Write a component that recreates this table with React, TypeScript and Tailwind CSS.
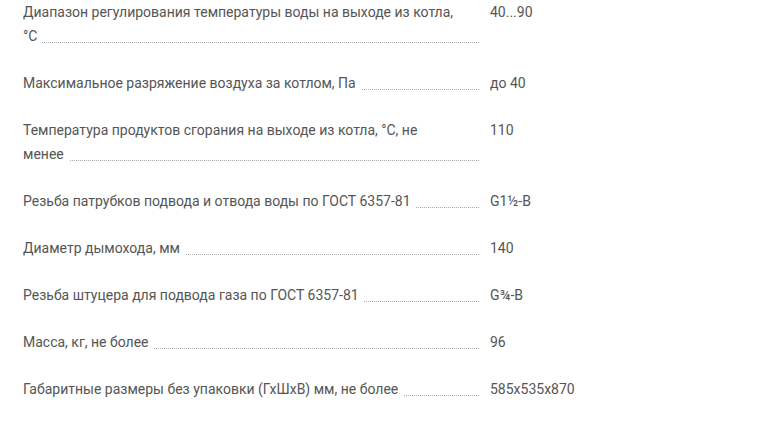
const specs = [
  {
    label: "Диапазон регулирования температуры воды на выходе из котла, °С",
    value: "40...90",
  },
  { label: "Максимальное разряжение воздуха за котлом, Па", value: "до 40" },
  {
    label: "Температура продуктов сгорания на выходе из котла, °С, не менее",
    value: "110",
  },
  {
    label: "Резьба патрубков подвода и отвода воды по ГОСТ 6357-81",
    value: "G1½-В",
  },
  { label: "Диаметр дымохода, мм", value: "140" },
  { label: "Резьба штуцера для подвода газа по ГОСТ 6357-81", value: "G¾-В" },
  { label: "Масса, кг, не более", value: "96" },
  {
    label: "Габаритные размеры без упаковки (ГхШхВ) мм, не более",
    value: "585х535х870",
  },
];

function SpecRow({ label, value }: { label: string; value: string }) {
  return (
    <div className="flex gap-[11px]">
      <div className="relative w-[456px] shrink-0 pr-[20px]">
        {/* точки-заполнитель под последней строкой */}
        <div className="absolute right-0 bottom-[5px] left-0 border-b border-dotted border-[#aaa]" />
        <span className="relative bg-white pr-[5px]">{label}</span>
      </div>
      <div className="flex-1">{value}</div>
    </div>
  );
}

export default function App() {
  return (
    <div className="h-[430px] w-[760px] overflow-hidden bg-white pl-[23px] font-['Roboto',sans-serif] text-[14px] leading-6 text-[#555]">
      <div className="flex flex-col gap-[23px]">
        {specs.map(item => (
          <SpecRow key={item.label} label={item.label} value={item.value} />
        ))}
      </div>
    </div>
  );
}
